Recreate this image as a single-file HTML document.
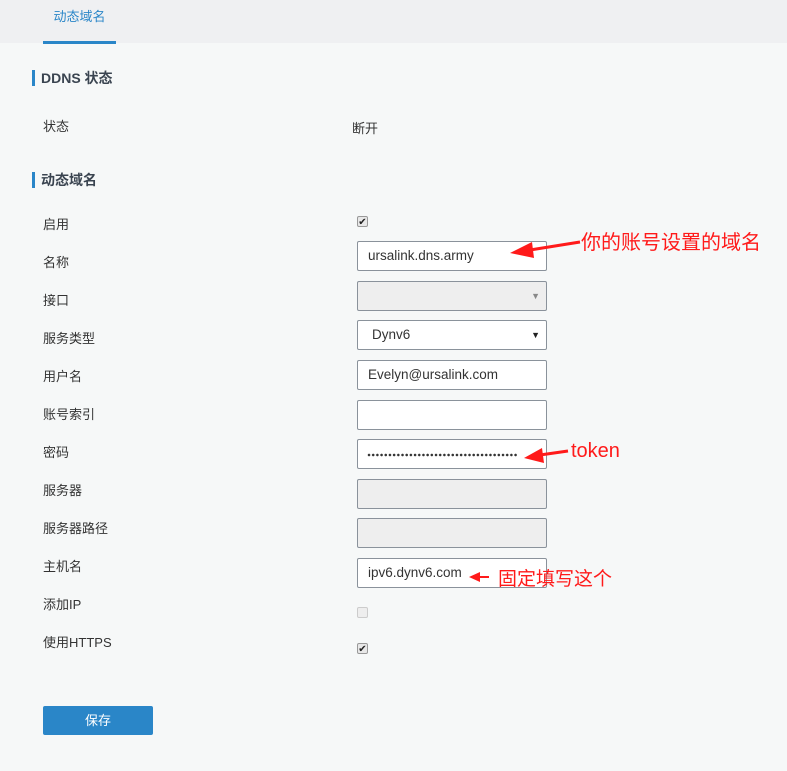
<!DOCTYPE html><html><head><meta charset="utf-8"><style>
body{margin:0;width:787px;height:771px;background:#f6f8f8;font-family:"Liberation Sans","Noto Sans CJK SC",sans-serif;position:relative;overflow:hidden;color:#333;font-size:13px}
.a{position:absolute;white-space:nowrap}
.hdr{position:absolute;left:0;top:0;width:787px;height:43px;background:#eff0f2}
.tab{left:43px;top:0;width:73px;height:41px;border-bottom:3px solid #2a86c8;color:#2a86c8;text-align:center;line-height:34px;font-size:13px}
.sec{left:32px;border-left:3px solid #2a86c8;padding-left:6px;font-weight:bold;font-size:14px;color:#3a4450;line-height:16px}
.lb{left:43px;line-height:16px}
.in{position:absolute;left:357px;width:190px;height:30px;border:1px solid #8a929b;border-radius:2px;background:#fff;box-sizing:border-box;padding-left:10px;line-height:28px;font-size:13.5px;color:#333}
.dis{background:#eeeeee}
.cb{position:absolute;left:357px;width:11px;height:11px;border:1px solid #999;border-radius:2px;background:#e8e8e8;font-size:10px;line-height:11px;text-align:center;color:#222;box-sizing:border-box}
.r{color:#ff1a1a;font-size:20px}
</style></head><body>
<div class="hdr"></div>
<div class="a tab">动态域名</div>
<div class="a sec" style="top:70px">DDNS 状态</div>
<div class="a lb" style="top:119px">状态</div>
<div class="a" style="left:352px;top:118px">断开</div>
<div class="a sec" style="top:172px">动态域名</div>
<div class="a lb" style="top:217px">启用</div>
<div class="a lb" style="top:255px">名称</div>
<div class="a lb" style="top:293px">接口</div>
<div class="a lb" style="top:331px">服务类型</div>
<div class="a lb" style="top:369px">用户名</div>
<div class="a lb" style="top:407px">账号索引</div>
<div class="a lb" style="top:445px">密码</div>
<div class="a lb" style="top:483px">服务器</div>
<div class="a lb" style="top:521px">服务器路径</div>
<div class="a lb" style="top:559px">主机名</div>
<div class="a lb" style="top:597px">添加IP</div>
<div class="a lb" style="top:635px">使用HTTPS</div>
<div class="cb" style="top:216px">✔</div>
<div class="in" style="top:241px">ursalink.dns.army</div>
<div class="in dis" style="top:281px"><span style="position:absolute;right:6px;top:0;font-size:9px;color:#888">▼</span></div>
<div class="in" style="top:320px;padding-left:14px">Dynv6<span style="position:absolute;right:6px;top:0;font-size:9px;color:#222">▼</span></div>
<div class="in" style="top:360px">Evelyn@ursalink.com</div>
<div class="in" style="top:400px"></div>
<div class="in" style="top:439px"><div style="position:absolute;left:9px;top:13px;width:151px;height:4px;background:radial-gradient(circle at 2px 2px,#333 1.1px,transparent 1.5px);background-size:4.2px 4px"></div></div>
<div class="in dis" style="top:479px"></div>
<div class="in dis" style="top:518px"></div>
<div class="in" style="top:558px">ipv6.dynv6.com</div>
<div class="cb" style="top:607px;background:#eee;border-color:#ccc"></div>
<div class="cb" style="top:643px">✔</div>
<div class="a" style="left:43px;top:706px;width:110px;height:29px;background:#2a86c8;border-radius:2px;color:#fff;text-align:center;line-height:29px">保存</div>
<div class="a r" style="left:581px;top:226px">你的账号设置的域名</div>
<div class="a r" style="left:571px;top:440px">token</div>
<div class="a r" style="left:498px;top:564px;font-size:19px">固定填写这个</div>
<svg class="a" style="left:0;top:0" width="787" height="771">
<path d="M580 242 L530 250" stroke="#ff1a1a" stroke-width="3"/><path d="M510 253 L532 242 L534 258Z" fill="#ff1a1a"/>
<path d="M568 451 L540 455" stroke="#ff1a1a" stroke-width="3"/><path d="M524 458 L542 448 L544 463Z" fill="#ff1a1a"/>
<path d="M489 577 L478 577" stroke="#ff1a1a" stroke-width="2"/><path d="M469 577 L480 572 L480 582Z" fill="#ff1a1a"/>
</svg>
</body></html>
